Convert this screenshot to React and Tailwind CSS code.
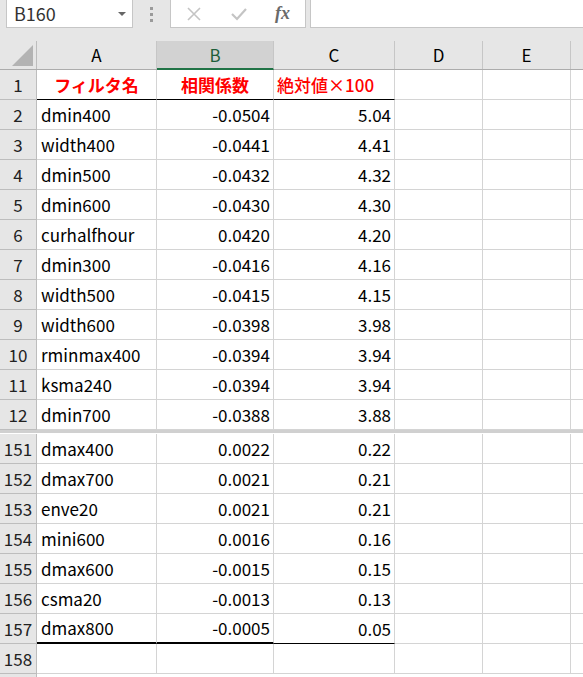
import React from 'react';

const top = [
  ['dmin400', '-0.0504', '5.04'],
  ['width400', '-0.0441', '4.41'],
  ['dmin500', '-0.0432', '4.32'],
  ['dmin600', '-0.0430', '4.30'],
  ['curhalfhour', '0.0420', '4.20'],
  ['dmin300', '-0.0416', '4.16'],
  ['width500', '-0.0415', '4.15'],
  ['width600', '-0.0398', '3.98'],
  ['rminmax400', '-0.0394', '3.94'],
  ['ksma240', '-0.0394', '3.94'],
  ['dmin700', '-0.0388', '3.88'],
];

const bottom = [
  ['dmax400', '0.0022', '0.22'],
  ['dmax700', '0.0021', '0.21'],
  ['enve20', '0.0021', '0.21'],
  ['mini600', '0.0016', '0.16'],
  ['dmax600', '-0.0015', '0.15'],
  ['csma20', '-0.0013', '0.13'],
  ['dmax800', '-0.0005', '0.05'],
];

const RowHead = ({ n }) => (
  <div className="w-[37px] shrink-0 h-full flex items-center justify-center bg-[#e6e6e6] border-r border-b border-[#bdbdbd] text-[#222]">
    {n}
  </div>
);

const DataRow = ({ n, cells, last }) => (
  <div className="flex h-[30px]">
    <RowHead n={n} />
    <div className={`w-[120px] shrink-0 flex items-center pl-[4px] border-r border-[#d4d4d4] ${last ? 'border-b-2 border-b-black' : 'border-b'}`}>
      {cells[0]}
    </div>
    <div className={`w-[117px] shrink-0 flex items-center justify-end pr-[3px] border-r border-[#d4d4d4] ${last ? 'border-b-2 border-b-black' : 'border-b'}`}>
      {cells[1]}
    </div>
    <div className={`w-[121px] shrink-0 flex items-center justify-end pr-[3px] border-r border-[#d4d4d4] ${last ? 'border-b border-b-black' : 'border-b'}`}>
      {cells[2]}
    </div>
    <div className="w-[88px] shrink-0 border-r border-b border-[#d4d4d4]" />
    <div className="w-[88px] shrink-0 border-r border-b border-[#d4d4d4]" />
    <div className="flex-1 border-b border-[#d4d4d4]" />
  </div>
);

export default function App() {
  return (
    <div
      className="w-[583px] h-[677px] overflow-hidden bg-white text-[17px] text-black"
      style={{ fontFamily: '"Noto Sans CJK JP", "Noto Sans", sans-serif' }}
    >
      {/* formula bar */}
      <div className="h-[41px] bg-[#e6e6e6] pl-[6px]">
        <div className="flex h-[28px]">
          <div className="w-[127px] h-[28px] bg-white border border-[#c6c6c6] border-t-0 flex items-center justify-between pl-[7px] pr-[6px] text-[#333] text-[18px]">
            <span>B160</span>
            <span className="w-0 h-0 border-l-[4px] border-r-[4px] border-t-[4px] border-l-transparent border-r-transparent border-t-[#666]" />
          </div>
          <div className="w-[37px] flex flex-col items-center justify-center gap-[3px]">
            <span className="w-[3px] h-[3px] bg-[#9a9a9a]" />
            <span className="w-[3px] h-[3px] bg-[#9a9a9a]" />
            <span className="w-[3px] h-[3px] bg-[#9a9a9a]" />
          </div>
          <div className="w-[136px] h-[28px] bg-white border border-[#c6c6c6] border-t-0 flex items-center">
            <svg width="16" height="16" viewBox="0 0 16 16" className="ml-[15px]">
              <path d="M2 2L14 14M14 2L2 14" stroke="#c4c4c4" strokeWidth="1.6" fill="none" />
            </svg>
            <svg width="18" height="16" viewBox="0 0 18 16" className="ml-[28px]">
              <path d="M2 8L7 13L16 3" stroke="#c4c4c4" strokeWidth="2.2" fill="none" />
            </svg>
            <span
              className="ml-[27px] italic font-bold text-[18px] text-[#6a6a6a]"
              style={{ fontFamily: '"Liberation Serif", serif' }}
            >
              fx
            </span>
          </div>
          <div className="ml-[4px] flex-1 h-[28px] bg-white border-l border-b border-[#c6c6c6]" />
        </div>
      </div>

      {/* column header */}
      <div className="flex h-[29px] bg-[#e6e6e6] border-b border-[#acacac]">
        <div className="w-[37px] shrink-0 relative border-r border-[#bdbdbd]">
          <svg width="37" height="29" className="absolute inset-0">
            <polygon points="12,25 33,25 33,4" fill="#b3b3b3" />
          </svg>
        </div>
        <div className="w-[120px] shrink-0 flex items-center justify-center border-r border-[#c6c6c6]">A</div>
        <div className="w-[117px] shrink-0 flex items-center justify-center bg-[#d2d2d2] border-r border-[#c6c6c6] border-b-2 border-b-[#217346] text-[#1e5e3a] -mb-px">B</div>
        <div className="w-[121px] shrink-0 flex items-center justify-center border-r border-[#c6c6c6]">C</div>
        <div className="w-[88px] shrink-0 flex items-center justify-center border-r border-[#c6c6c6]">D</div>
        <div className="w-[88px] shrink-0 flex items-center justify-center border-r border-[#c6c6c6]">E</div>
        <div className="flex-1" />
      </div>

      {/* header row */}
      <div className="flex h-[30px]">
        <RowHead n={1} />
        <div className="w-[120px] shrink-0 flex items-center justify-center border-r border-[#d4d4d4] border-b border-b-black text-[#ff0000] font-bold">
          フィルタ名
        </div>
        <div className="w-[117px] shrink-0 flex items-center justify-center border-r border-[#d4d4d4] border-b border-b-black text-[#ff0000] font-bold">
          相関係数
        </div>
        <div className="w-[121px] shrink-0 flex items-center pl-[3px] border-r border-[#d4d4d4] border-b border-b-black text-[#ff0000] font-medium whitespace-nowrap">
          絶対値×100
        </div>
        <div className="w-[88px] shrink-0 border-r border-b border-[#d4d4d4]" />
        <div className="w-[88px] shrink-0 border-r border-b border-[#d4d4d4]" />
        <div className="flex-1 border-b border-[#d4d4d4]" />
      </div>

      {top.map((c, i) => (
        <DataRow key={i} n={i + 2} cells={c} />
      ))}

      {/* hidden rows gap */}
      <div className="h-[4px] bg-white border-t-[3px] border-[#d0d0d0]" />

      {bottom.map((c, i) => (
        <DataRow key={i} n={i + 151} cells={c} last={i === bottom.length - 1} />
      ))}

      <div className="flex h-[30px]">
        <RowHead n={158} />
        <div className="w-[120px] shrink-0 border-r border-b border-[#d4d4d4]" />
        <div className="w-[117px] shrink-0 border-r border-b border-[#d4d4d4]" />
        <div className="w-[121px] shrink-0 border-r border-b border-[#d4d4d4]" />
        <div className="w-[88px] shrink-0 border-r border-b border-[#d4d4d4]" />
        <div className="w-[88px] shrink-0 border-r border-b border-[#d4d4d4]" />
        <div className="flex-1 border-b border-[#d4d4d4]" />
      </div>
      <div className="flex h-[30px]">
        <div className="w-[37px] shrink-0 h-full bg-[#e6e6e6] border-r border-[#bdbdbd]" />
      </div>
    </div>
  );
}
